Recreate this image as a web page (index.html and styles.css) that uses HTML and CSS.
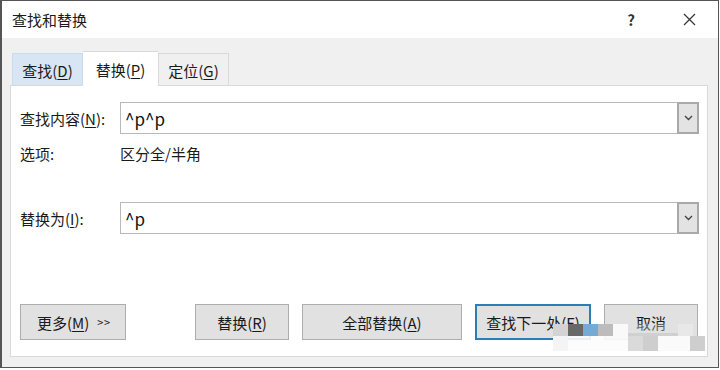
FILE: index.html
```html
<!DOCTYPE html>
<html lang="zh-CN">
<head>
  <meta charset="UTF-8">
  <title>查找和替换</title>
  <link rel="stylesheet" href="styles.css">
</head>
<body>
  <div class="dialog">
    <div class="titlebar">
      <span class="title">查找和替换</span>
      <span class="help">?</span>
      <span class="close">
        <svg width="13" height="13" viewBox="0 0 13 13"><path d="M1 1 L12 12 M12 1 L1 12" stroke="#333" stroke-width="1.2" fill="none"/></svg>
      </span>
    </div>

    <div class="tabs">
      <div class="tab hover">查找(<u>D</u>)</div>
      <div class="tab active">替换(<u>P</u>)</div>
      <div class="tab">定位(<u>G</u>)</div>
    </div>

    <div class="panel">
      <div class="field">
        <label>查找内容(<u>N</u>):</label>
        <div class="combo">
          <span class="combo-text">^p^p</span>
          <span class="combo-btn"><svg width="9" height="6" viewBox="0 0 9 6"><path d="M1 1 L4.5 4.5 L8 1" stroke="#444" stroke-width="1.4" fill="none"/></svg></span>
        </div>
      </div>
      <div class="options">
        <span class="opt-label">选项:</span>
        <span>区分全/半角</span>
      </div>
      <div class="field second">
        <label>替换为(<u>I</u>):</label>
        <div class="combo">
          <span class="combo-text">^p</span>
          <span class="combo-btn"><svg width="9" height="6" viewBox="0 0 9 6"><path d="M1 1 L4.5 4.5 L8 1" stroke="#444" stroke-width="1.4" fill="none"/></svg></span>
        </div>
      </div>

      <div class="buttons">
        <button class="btn more">更多(<u>M</u>) <span class="chev">&gt; &gt;</span></button>
        <button class="btn replace">替换(<u>R</u>)</button>
        <button class="btn replace-all">全部替换(<u>A</u>)</button>
        <button class="btn find-next">查找下一处(<u>F</u>)</button>
        <button class="btn cancel">取消</button>
      </div>
    </div>

    <!-- pixelated watermark over the lower right corner -->
    <div class="watermark">
      <div class="wm-row">
        <i class="c1"></i><i class="c2"></i><i class="c3"></i><i class="c4"></i><i class="c5"></i>
        <i class="c6 wide"></i><i class="c7"></i>
      </div>
      <div class="wm-row">
        <i class="c8"></i><i class="c5"></i><i class="c5"></i><i class="c5"></i><i class="c5"></i>
        <i class="c9"></i><i class="c10"></i><i class="c11 wider"></i><i class="c10"></i>
      </div>
    </div>
  </div>
</body>
</html>
```

FILE: styles.css
```css
* {
  margin: 0;
  padding: 0;
  box-sizing: border-box;
}

body {
  background: #ffffff;
  font-family: "Noto Sans CJK SC", "Noto Sans", sans-serif;
  font-size: 15px;
  color: #1a1a1a;
}

u {
  text-decoration: underline;
  text-underline-offset: 2px;
  text-decoration-thickness: 1px;
}

.dialog {
  position: relative;
  width: 719px;
  height: 368px;
  background: #f0f0f0;
  border: 1px solid #555;
  border-left-width: 2px;
  display: flex;
  flex-direction: column;
}

.titlebar {
  height: 37px;
  background: #ffffff;
  display: flex;
  align-items: center;
  padding-left: 10px;
  flex-shrink: 0;
}

.title {
  flex: 1;
  line-height: 1;
}

.help {
  font-weight: bold;
  font-size: 15px;
  color: #333;
  margin-right: 48px;
}

.close {
  display: flex;
  margin-right: 22px;
}

.tabs {
  display: flex;
  align-items: flex-end;
  height: 35px;
  margin-top: 13px;
  padding-left: 10px;
  flex-shrink: 0;
}

.tab {
  width: 71px;
  height: 33px;
  display: flex;
  align-items: center;
  justify-content: center;
  white-space: nowrap;
  border: 1px solid #d9d9d9;
  border-bottom: none;
  background: #f0f0f0;
  line-height: 1;
}

.tab.hover {
  background: #d8e6f3;
  border-color: #c7dcef;
}

.tab.active {
  position: relative;
  z-index: 1;
  height: 35px;
  width: 75px;
  background: #ffffff;
  border-left: none;
  border-right: none;
}

.panel {
  flex: 1;
  margin: -1px 10px 10px 8px;
  background: #ffffff;
  border: 1px solid #d9d9d9;
  padding: 16px 8px 16px 9px;
  display: flex;
  flex-direction: column;
}

.field {
  display: flex;
  align-items: center;
  height: 32px;
}

.field.second {
  margin-top: 39px;
}

.field label,
.opt-label {
  width: 100px;
  flex-shrink: 0;
}

.combo {
  flex: 1;
  height: 32px;
  border: 1px solid #b9b9b9;
  display: flex;
  align-items: stretch;
}

.combo-text {
  flex: 1;
  padding-left: 4px;
  display: flex;
  align-items: center;
  font-size: 17px;
  color: #111;
}

.combo-btn {
  width: 22px;
  margin: -1px -1px -1px 0;
  background: #e3e3e3;
  border: 2px solid #a9a9a9;
  display: flex;
  align-items: center;
  justify-content: center;
}

.options {
  display: flex;
  align-items: center;
  height: 20px;
  margin-top: 9px;
}

.buttons {
  margin-top: auto;
  display: flex;
  gap: 13px;
  padding-right: 1px;
}

.btn {
  height: 36px;
  font-family: inherit;
  font-size: 15px;
  color: #1a1a1a;
  background: #e1e1e1;
  border: 1px solid #adadad;
  display: flex;
  align-items: center;
  justify-content: center;
}

.more {
  width: 106px;
}

.chev {
  font-size: 11px;
  margin-left: 8px;
  letter-spacing: -1px;
}

.replace {
  width: 94px;
  margin-left: auto;
}

.replace-all {
  width: 160px;
}

.find-next {
  width: 116px;
  border: 2px solid #2f7db5;
}

.cancel {
  width: 94px;
}

.watermark {
  position: absolute;
  left: 551px;
  top: 323px;
  display: flex;
  flex-direction: column;
}

.wm-row {
  display: flex;
  height: 12px;
}

.wm-row + .wm-row {
  height: 15px;
}

.wm-row i {
  display: block;
  width: 15px;
}

.wm-row i.wide {
  width: 50px;
}

.wm-row i.wider {
  width: 32px;
}

.c1 { background: #d3d3d3; }
.c2 { background: #686868; }
.c3 { background: #74abd6; }
.c4 { background: #bcbcbc; }
.c5 { background: rgba(252, 252, 252, 0.9); }
.c6 { background: rgba(225, 225, 225, 0.35); border-bottom: 3px solid #d0d0d0; }
.c7 { background: rgba(240, 240, 240, 0.5); }
.c8 { background: #f4f4f4; }
.c9 { background: #dadada; }
.c10 { background: #cecece; }
.c11 { background: #fafafa; }
```
